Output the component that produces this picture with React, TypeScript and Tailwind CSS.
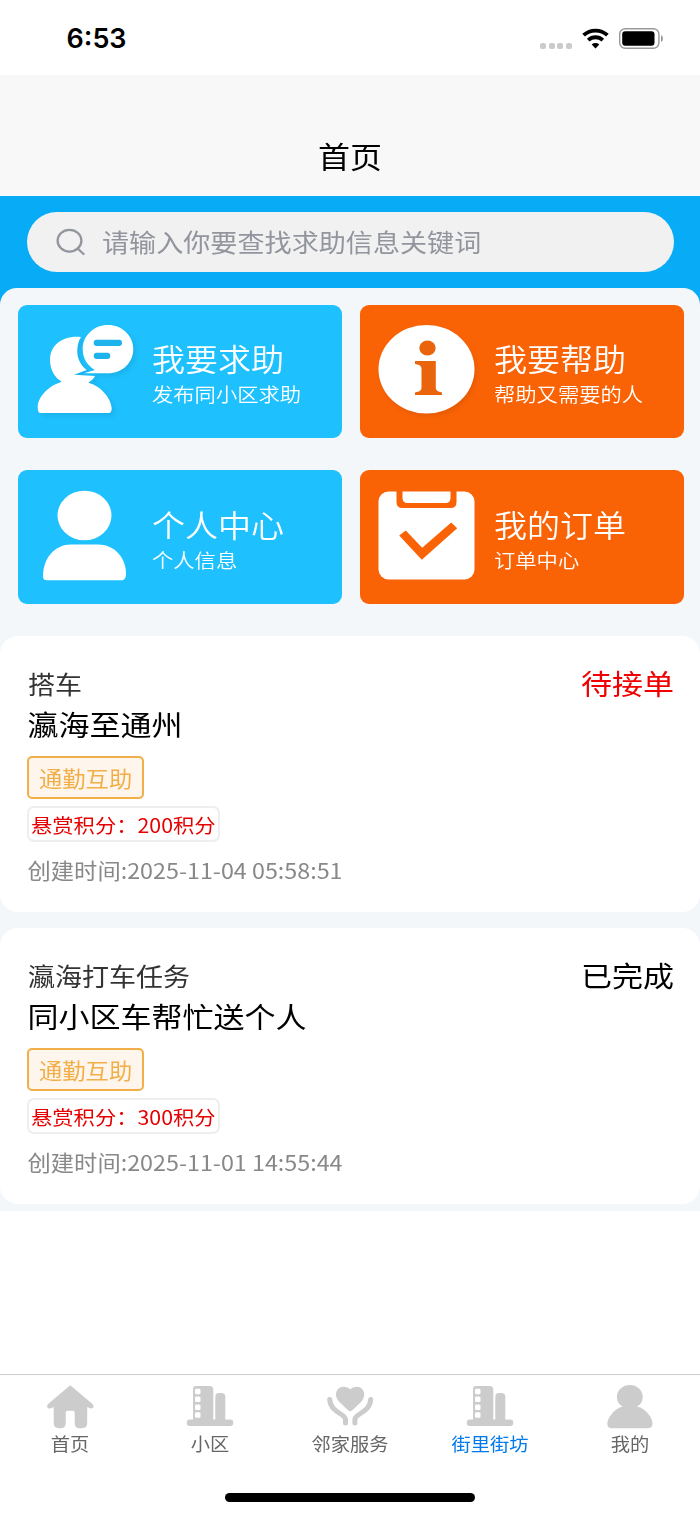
import React, { useState } from 'react';

interface Shortcut {
  title: string;
  desc: string;
  color: string;
  icon: React.ReactNode;
}

interface HelpOrder {
  id: number;
  type: string;
  title: string;
  status: string;
  statusColor: string;
  tag: string;
  points: number;
  createdAt: string;
}

// ---------- Icons ----------

const AskIcon = () => (
  <svg className="h-[90px] w-24 overflow-visible drop-shadow-[3px_3px_2px_rgba(0,70,110,0.12)]" viewBox="-1 0 96 90" fill="#fff">
    <path d="M43 12 C25 10 12 20 12 35 C12 45 17 53 23.700 56.700 C10 61 0 72 -.3 82 C-.2 86 .5 88 3 88 H70.500 C73 88 73.700 86 73.700 83 C73 73 63 61 50.300 57.700 C53 56 56 53.500 57 51 L36 49.700 L48.700 45 C41 39 39 31 39.300 25 C39.500 20 41 15 43 12Z" />
    <path d="M70 0 C84 0 95.300 10.500 95.300 24 C95.300 38 84 48.300 70 48.300 H46 L57 45 C49 40.500 44.700 33 44.700 24 C44.700 10.500 56 0 70 0Z" />
    <rect x="55.700" y="14.700" width="28.300" height="6.300" rx="3" fill="#1eb3ea" />
    <rect x="55.700" y="27.700" width="16.600" height="6.300" rx="3" fill="#1eb3ea" />
  </svg>
);

const InfoIcon = () => (
  <svg className="h-[90px] w-24 overflow-visible drop-shadow-[2px_3px_2px_rgba(120,40,0,0.14)]" viewBox=".5 0 96 90">
    <ellipse cx="48" cy="44.300" rx="48" ry="44.300" fill="#fff" />
    <ellipse cx="49" cy="23" rx="8.200" ry="7.500" fill="#ea640c" />
    <path d="M36.500 36 H57.300 V62 C57.300 65.500 59 66.500 63.500 67.500 V70 H36.500 V67.500 C41.500 66.500 43 65.500 43 62 V44 C43 40.500 41 40 36.500 39Z" fill="#ea640c" />
  </svg>
);

const ProfileIcon = () => (
  <svg className="h-[90px] w-24 overflow-visible" viewBox="-1 0 96 90" fill="#fff">
    <ellipse cx="46.500" cy="24.500" rx="27" ry="24.800" />
    <path d="M33 53.500 H60 C76 53.500 88 66 88 83 C88 87 86.500 89.300 83 89.300 H9 C6 89.300 5 88 5 85 C5 67 17 53.500 33 53.500Z" />
  </svg>
);

const OrderIcon = () => (
  <svg className="h-[90px] w-24 overflow-visible" viewBox=".5 0 96 90">
    <rect y=".5" width="96" height="88" rx="10" fill="#fff" />
    <path d="M18 0 H78 V11 Q78 17 72 17 H24 Q18 17 18 11Z" fill="#f96306" />
    <path d="M24 .5 H72 V7 Q72 12 67 12 H29 Q24 12 24 7Z" fill="#fff" />
    <path d="M20.700 44.500 L27.300 39.500 L43.700 56.800 L72.700 31.500 L78.700 37.200 L43.300 68.800Z" fill="#f96306" />
  </svg>
);

const HomeIcon = () => (
  <svg className="h-11 w-12" viewBox="0 0 48 44" fill="#ccc">
    <path d="M24.300 .3 L46.500 19 C49 22 47 24 44 23.300 L41.200 22 V38 Q41.200 43.200 36 43.200 H33 Q28.700 43.200 28.700 38 V27.500 Q28.700 25.700 27 25.700 H21.500 Q19.700 25.700 19.700 27.500 V38 Q19.700 43.200 15 43.200 H13 Q7.700 43.200 7.700 38 V22 L5 23.300 C1.500 24 0 22 2 19Z" />
  </svg>
);

const BuildingIcon = () => (
  <svg className="h-11 w-12" viewBox="0 0 48 44" fill="#ccc">
    <rect x=".7" y="34.500" width="46.600" height="6.600" rx="3.300" />
    <path d="M7 36 V4 Q7 1 10 1 H23.500 Q27.300 1 27.300 4.500 V36Z" />
    <path d="M29.300 36 V12 Q29.300 8 33 8 H35.500 Q39.300 8 39.300 12 V36Z" />
    <g fill="#fff">
      <rect x="9" y="3.700" width="5.500" height="5.500" rx="1.300" />
      <rect x="9" y="11.600" width="5.500" height="5.500" rx="1.300" />
      <rect x="9" y="19.500" width="5.500" height="5.500" rx="1.300" />
      <rect x="9" y="27.200" width="5.500" height="5.500" rx="1.300" />
    </g>
  </svg>
);

const ServiceIcon = () => (
  <svg className="h-11 w-12" viewBox="0 0 48 44">
    <path d="M24.200 4.500 C28 .5 35 1 37.500 6 C39.500 11 37 15.500 33.500 18.500 L26 25.500 Q24.200 27 22.400 25.500 L15 18.500 C11.500 15.500 8.500 11 10.700 6 C13 1 20.500 .5 24.200 4.500Z" fill="#ccc" />
    <g fill="none" stroke="#ccc" strokeWidth="5" strokeLinecap="round">
      <path d="M3.700 14.500 C4.500 27.500 19.500 28.500 19.500 34.500 V38" />
      <path d="M44.700 14.500 C43.900 27.500 28.900 28.500 28.900 34.500 V38" />
    </g>
  </svg>
);

const MineIcon = () => (
  <svg className="h-11 w-12" viewBox="0 0 48 44" fill="#ccc">
    <ellipse cx="23.800" cy="11.900" rx="12.900" ry="11.900" />
    <path d="M17 21.500 H31 C40 23.500 46.500 33 46.500 38.500 Q46.500 43.200 41.500 43.200 H6 Q1.300 43.200 1.300 38.500 C1.500 33 8 23.500 17 21.500Z" />
  </svg>
);

// ---------- Data ----------

const SHORTCUTS: Shortcut[] = [
  { title: '我要求助', desc: '发布同小区求助', color: 'bg-[#1ec1fd]', icon: <AskIcon /> },
  { title: '我要帮助', desc: '帮助又需要的人', color: 'bg-[#f96306]', icon: <InfoIcon /> },
  { title: '个人中心', desc: '个人信息', color: 'bg-[#1ec1fd]', icon: <ProfileIcon /> },
  { title: '我的订单', desc: '订单中心', color: 'bg-[#f96306]', icon: <OrderIcon /> },
];

const ORDERS: HelpOrder[] = [
  {
    id: 1,
    type: '搭车',
    title: '瀛海至通州',
    status: '待接单',
    statusColor: 'text-[#f00000]',
    tag: '通勤互助',
    points: 200,
    createdAt: '2025-11-04 05:58:51',
  },
  {
    id: 2,
    type: '瀛海打车任务',
    title: '同小区车帮忙送个人',
    status: '已完成',
    statusColor: 'text-black',
    tag: '通勤互助',
    points: 300,
    createdAt: '2025-11-01 14:55:44',
  },
];

const TABS = [
  { name: '首页', icon: <HomeIcon /> },
  { name: '小区', icon: <BuildingIcon /> },
  { name: '邻家服务', icon: <ServiceIcon /> },
  { name: '街里街坊', icon: <BuildingIcon /> },
  { name: '我的', icon: <MineIcon /> },
];

// ---------- Components ----------

const StatusBar = () => (
  <div className="flex h-[74.5px] items-center justify-between bg-white pt-0.5 pr-[36.5px] pl-[66.5px]">
    <span className="pt-0.5 font-['Inter'] text-[27px] leading-8 font-semibold text-black">6:53</span>
    <div className="flex h-[21px] items-end">
      <div className="flex gap-[2.4px]">
        {[0, 1, 2, 3].map((dot) => (
          <i key={dot} className="h-1.5 w-1.5 rounded-[2px] bg-[#cbcbcb]" />
        ))}
      </div>
      <svg className="ml-2.5 h-[21px] w-[27px]" viewBox="0 0 27 21" fill="none" stroke="#000" strokeWidth="3.800">
        <path d="M1.600 7.200 A17.500 17.500 0 0 1 25.400 7.200" />
        <path d="M6.200 12.100 A10.800 10.800 0 0 1 20.800 12.100" />
        <path d="M13.500 20.500 L9.700 16.600 A5.600 5.600 0 0 1 17.300 16.600Z" fill="#000" stroke="none" />
      </svg>
      <svg className="ml-2.5 h-[21px] w-[45px]" viewBox="0 0 45 21">
        <rect x=".7" y=".7" width="39.200" height="19.600" rx="5.500" fill="none" stroke="#999" strokeWidth="1.400" />
        <rect x="3.200" y="3.200" width="32.300" height="14.600" rx="3" />
        <path d="M42 7 Q44 8 44 10.500 Q44 13 42 14Z" fill="#999" />
      </svg>
    </div>
  </div>
);

const ShortcutCard = ({ item }: { item: Shortcut }) => (
  <button className={`flex h-[133.5px] items-start rounded-[9px] pt-[20.5px] pl-[19px] text-left font-[350] text-white ${item.color}`}>
    {item.icon}
    <div className="ml-[19.5px] pt-[13px]">
      <p className="scale-y-[0.92] text-[33px] leading-[40px]">{item.title}</p>
      <p className="scale-y-[0.92] text-[21.300px] leading-[32px]">{item.desc}</p>
    </div>
  </button>
);

const OrderCard = ({ order }: { order: HelpOrder }) => (
  <div className="h-[276px] rounded-[18px] bg-white px-[27px] pt-7">
    <div className="flex items-center justify-between pl-px">
      <span className="scale-y-[0.92] text-[27px] leading-[40px] text-[#333]">{order.type}</span>
      <span className={`-mt-0.5 -mr-px scale-y-[0.92] text-[31px] leading-[40px] ${order.statusColor}`}>{order.status}</span>
    </div>
    <h2 className="scale-y-[0.92] pl-[0.5px] text-[31px] leading-[40px] text-black">{order.title}</h2>
    <div className="mt-3 flex flex-col items-start">
      <span className="flex h-[43px] items-center rounded-[5px] border-2 border-[#f2ae48] bg-[#fef6ec] px-2.5 text-[23.300px] text-[#f2ae48]">
        <span className="scale-y-[0.92] pt-px">{order.tag}</span>
      </span>
      <span className="mt-[7px] flex h-[36px] items-center rounded-[7px] border-2 border-[#eee] px-[2px] text-[21.300px] whitespace-nowrap text-[#e60000]">
        <span className="scale-y-[0.92] pt-px">悬赏积分：{order.points}积分</span>
      </span>
      <span className="mt-[12.5px] ml-[0.5px] scale-y-[0.92] text-[23.300px] leading-[30px] text-[#888]">创建时间:{order.createdAt}</span>
    </div>
  </div>
);

const App: React.FC = () => {
  const [activeTab, setActiveTab] = useState('街里街坊');

  return (
    <div className="flex h-[1515px] w-[700px] flex-col overflow-hidden bg-white font-['Noto_Sans_CJK_SC',sans-serif]">
      <StatusBar />

      <header className="flex h-[121px] items-end justify-center bg-[#f8f8f8] pb-[18px]">
        <h1 className="scale-y-[0.92] text-[32px] leading-[46px] text-black">首页</h1>
      </header>

      <main className="bg-[#08abf6]">
        {/* search */}
        <div className="px-[27px] py-4">
          <div className="mr-[-1px] flex h-[60.5px] items-center rounded-full bg-[#f1f1f1] pl-7">
            <svg className="h-7 w-[30px]" viewBox="-.5 0 30 28" fill="none" stroke="#92959d" strokeWidth="2.300">
              <ellipse cx="14" cy="12.700" rx="11.900" ry="10.900" />
              <path d="M22.200 20.500 L28 26" strokeLinecap="round" />
            </svg>
            <input
              className="ml-[17px] flex-1 scale-y-[0.92] bg-transparent text-[27.100px] leading-[40px] outline-none placeholder:text-[#92959d]"
              placeholder="请输入你要查找求助信息关键词"
            />
          </div>
        </div>

        {/* shortcuts + list */}
        <div className="rounded-t-[17px] bg-[#f3f7fa] pt-[16.5px] pb-[7px]">
          <div className="mr-4 ml-[17.5px] grid grid-cols-2 gap-x-[17.5px] gap-y-8">
            {SHORTCUTS.map((item) => (
              <ShortcutCard key={item.title} item={item} />
            ))}
          </div>
          <div className="mt-[32.5px] flex flex-col gap-4">
            {ORDERS.map((order) => (
              <OrderCard key={order.id} order={order} />
            ))}
          </div>
        </div>
      </main>

      <nav className="mt-auto h-[141px] border-t-[1.5px] border-[#ccc]">
        <div className="grid grid-cols-5">
          {TABS.map((tab) => (
            <button key={tab.name} onClick={() => setActiveTab(tab.name)} className="flex flex-col items-center pt-2.5">
              {tab.icon}
              <span className={`scale-y-[0.92] pt-px text-[19.300px] leading-[28px] ${activeTab === tab.name ? 'text-[#007aeb]' : 'text-[#666]'}`}>
                {tab.name}
              </span>
            </button>
          ))}
        </div>
        <div className="mx-auto mt-[35px] h-[9px] w-[250px] rounded-full bg-black" />
      </nav>
    </div>
  );
};

export default App;
